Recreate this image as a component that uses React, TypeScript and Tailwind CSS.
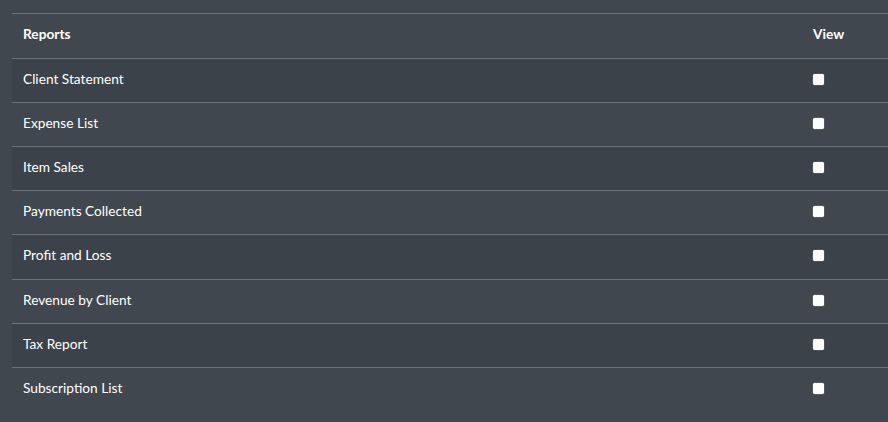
const REPORTS = [
  'Client Statement',
  'Expense List',
  'Item Sales',
  'Payments Collected',
  'Profit and Loss',
  'Revenue by Client',
  'Tax Report',
  'Subscription List',
];

export default function App() {
  return (
    <div className="w-[888px] h-[422px] overflow-hidden bg-[#40474e] pt-[13px] pl-[12px] font-['Lato','Liberation_Sans',sans-serif] text-[13.7px] text-white">
      <table className="w-full border-collapse">
        <thead>
          <tr className="h-[45px] border-t border-b border-[#6b737b]">
            <th className="pl-[11px] pb-[4px] text-left font-bold">Reports</th>
            <th className="w-[75px] pb-[4px] text-left font-bold">View</th>
          </tr>
        </thead>
        <tbody>
          {REPORTS.map((name, i) => (
            <tr
              key={name}
              className={`${i === 4 ? 'h-[45px]' : 'h-[44px]'} border-b border-[#6b737b] last:border-b-0 ${i % 2 === 0 ? 'bg-[#3c4249]' : ''}`}
            >
              <td className="pl-[11px] pb-[3px]">{name}</td>
              <td className="pb-[3px]">
                <span className="block w-[11px] h-[11px] rounded-[2px] bg-white shadow-[0_0_1px_#ffffff]" />
              </td>
            </tr>
          ))}
        </tbody>
      </table>
    </div>
  );
}
